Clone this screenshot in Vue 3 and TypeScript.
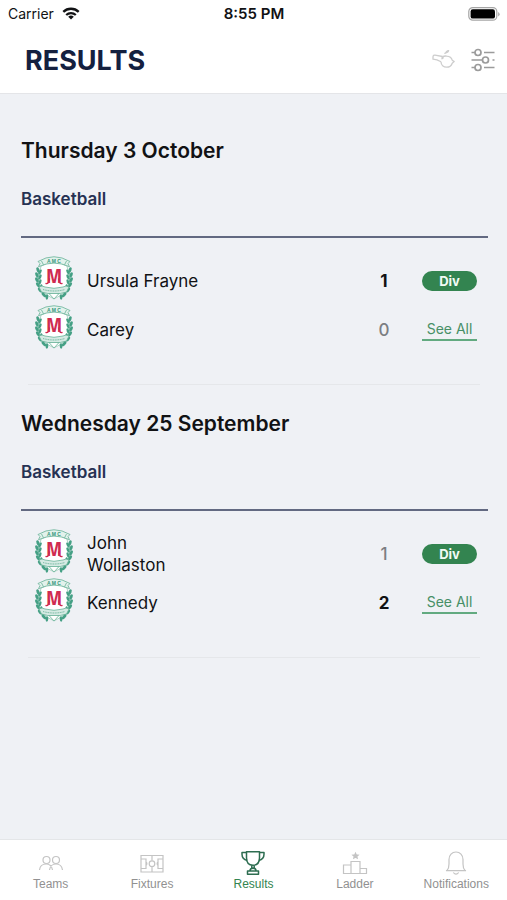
<script setup lang="ts">
interface Side {
  name: string
  score: number
  winner: boolean
}

interface MatchDay {
  date: string
  sport: string
  division: string
  sides: Side[]
}

interface Tab {
  id: string
  label: string
}

const days: MatchDay[] = [
  {
    date: 'Thursday 3 October',
    sport: 'Basketball',
    division: 'Div',
    sides: [
      { name: 'Ursula Frayne', score: 1, winner: true },
      { name: 'Carey', score: 0, winner: false },
    ],
  },
  {
    date: 'Wednesday 25 September',
    sport: 'Basketball',
    division: 'Div',
    sides: [
      { name: 'John Wollaston', score: 1, winner: false },
      { name: 'Kennedy', score: 2, winner: true },
    ],
  },
]

const tabs: Tab[] = [
  { id: 'teams', label: 'Teams' },
  { id: 'fixtures', label: 'Fixtures' },
  { id: 'results', label: 'Results' },
  { id: 'ladder', label: 'Ladder' },
  { id: 'notifications', label: 'Notifications' },
]

const activeTab = 'results'
const leaves = [0, 1, 2, 3, 4, 5]
</script>

<template>
  <div class="app">
    <div class="status">
      <div class="carrier">
        <span>Carrier</span>
        <svg class="wifi" viewBox="0 0 18 13" aria-hidden="true">
          <path d="M1.3 4.9a11 11 0 0 1 15.4 0" fill="none" stroke="currentColor" stroke-width="2.3" />
          <path d="M4.2 8a6.9 6.9 0 0 1 9.6 0" fill="none" stroke="currentColor" stroke-width="2.2" />
          <path d="M9 12.6 6.2 9.8a4 4 0 0 1 5.6 0z" fill="currentColor" />
        </svg>
      </div>
      <span class="time">8:55 PM</span>
      <div class="power">
        <svg class="battery" viewBox="0 0 32 14" aria-hidden="true">
          <rect x="0.8" y="0.6" width="28" height="12.6" rx="4" fill="none" stroke="#a5a5a5" stroke-width="1.2" />
          <rect x="2.6" y="2.3" width="24.4" height="9.3" rx="2.2" fill="#000" />
          <path d="M30.2 5v4.4q1.4-.8 1.4-2.2T30.2 5z" fill="#a5a5a5" />
        </svg>
      </div>
    </div>

    <header class="header">
      <h1>RESULTS</h1>
      <div class="actions">
        <button type="button" aria-label="Live scores">
          <svg class="whistle" viewBox="0 0 24 20" fill="none" stroke="#cdcdcd" stroke-width="1.3" stroke-linejoin="round">
            <path d="M1 6.200Q1.600 5 3 5.200l7.500 1.300M1 6.200v3q4 .2 8 2.600" />
            <path d="M10.500 6.700q2-.9 4.200-.6c3 .2 5 2 5.600 4.200l1.900 1.300-2 1.600c-.8 2.500-2.800 4-5.500 4-3.300 0-5.600-2.300-5.700-5.400M10.300 6.500l-.3 2.300 1.700-1.300" />
            <path d="M12.300 3.400l2.200-.6M13.700 2.700q.8-1.900 2.900-2.200-.2 1.900-2.900 2.200z" />
          </svg>
        </button>
        <button type="button" aria-label="Filter results">
          <svg class="filter" viewBox="0 0 24 24" fill="none" stroke="#9b9b9b" stroke-width="1.700">
            <path d="M.5 4.500H4M13 4.500h10.500M.5 12h11M21.500 12h2M.5 19.500H4M13 19.500h10.500" />
            <circle cx="7" cy="4.500" r="3" />
            <circle cx="14.500" cy="12" r="3" />
            <circle cx="7" cy="19.500" r="3" />
          </svg>
        </button>
      </div>
    </header>

    <main class="content">
      <section v-for="day in days" :key="day.date" class="day">
        <h2>{{ day.date }}</h2>
        <h3>{{ day.sport }}</h3>
        <div class="match">
          <ul class="sides">
            <li v-for="side in day.sides" :key="side.name" class="side">
              <svg class="crest" viewBox="0 0 40 44" aria-hidden="true">
                <path d="M7 10Q20 3 33 10l3 16q-1 10-16 17Q5 36 4 26z" fill="#fff" stroke="#9dcdbb" stroke-width="0.8" />
                <g fill="#45a085">
                  <g v-for="n in leaves" :key="n">
                    <ellipse :cx="[4, 3, 3, 4, 6, 10][n]" :cy="14 + n * 5" rx="1.500" ry="2.900" :transform="`rotate(${-20 - n * 5} ${[4, 3, 3, 4, 6, 10][n]} ${14 + n * 5})`" />
                    <ellipse :cx="[6, 6, 6, 7, 9, 13][n]" :cy="16 + n * 5" rx="1.300" ry="2.800" :transform="`rotate(${30 - n * 5} ${[6, 6, 6, 7, 9, 13][n]} ${16 + n * 5})`" />
                    <ellipse :cx="[36, 37, 37, 36, 34, 30][n]" :cy="14 + n * 5" rx="1.500" ry="2.900" :transform="`rotate(${20 + n * 5} ${[36, 37, 37, 36, 34, 30][n]} ${14 + n * 5})`" />
                    <ellipse :cx="[34, 34, 34, 33, 31, 27][n]" :cy="16 + n * 5" rx="1.300" ry="2.800" :transform="`rotate(${-30 + n * 5} ${[34, 34, 34, 33, 31, 27][n]} ${16 + n * 5})`" />
                  </g>
                </g>
                <path d="M4 5.500Q20-4 36 5.500l-2 2 1.500 3.200Q20 3.500 4.500 10.700L6 7.500z" fill="#e3f2ec" stroke="#67b197" stroke-width="0.8" />
                <path d="m7.500 5 2 3.800M32.500 5l-2 3.800" stroke="#67b197" stroke-width="0.8" />
                <text x="20" y="6.500" class="crest-motto">A M C</text>
                <text x="20" y="27" class="crest-letter">M</text>
                <path d="M15.500 23q-.5 5-3.500 4.500M24.500 23q.5 5 3.500 4.500" fill="none" stroke="#d02b50" stroke-width="1.300" stroke-linecap="round" />
                <path d="M5 31q3-2 6 0 9 2.600 18 0 3-2 6 0l-2.500 5Q20 40 7.500 36z" fill="#d5eae3" stroke="#67b197" stroke-width="0.8" />
                <path d="M9 33.500q11 3 22 0" fill="none" stroke="#67b197" stroke-width="1" stroke-dasharray="1 0.700" />
                <path d="M15 37.500h10L20 43z" fill="#fff" stroke="#67b197" stroke-width="0.8" />
              </svg>
              <span class="name">{{ side.name }}</span>
              <span class="score" :class="{ winner: side.winner }">{{ side.score }}</span>
            </li>
          </ul>
          <div class="links">
            <div class="cell"><span class="division">{{ day.division }}</span></div>
            <div class="cell"><a href="#all" class="see-all">See All</a></div>
          </div>
        </div>
      </section>
    </main>

    <nav class="tabs" aria-label="Main">
      <a v-for="tab in tabs" :key="tab.id" :href="`#${tab.id}`" class="tab" :class="{ active: tab.id === activeTab }">
        <svg class="tab-icon" viewBox="0 0 26 26" fill="none" stroke="currentColor" stroke-width="1.200" aria-hidden="true">
          <template v-if="tab.id === 'teams'">
            <circle cx="8.500" cy="10" r="3.500" />
            <circle cx="18" cy="10" r="3.500" />
            <path d="M1.500 20c.4-3.800 3-6 6.700-6 3.400 0 5.600 2 6.300 6M11.500 20c.6-3.900 3-6 6.500-6s6 2.200 6.500 6" />
          </template>
          <template v-else-if="tab.id === 'fixtures'">
            <path d="M2 5.500h22v16.500H2zM13 5.500v5M13 16.500v5.500M2 9h5v9.500H2M24 9h-5v9.500h5M7 12q1.800 1.800 0 3.500M19 12q-1.800 1.800 0 3.500" />
            <circle cx="13" cy="13.700" r="2.800" />
          </template>
          <template v-else-if="tab.id === 'results'">
            <g stroke-width="1.500" stroke-linejoin="round">
              <path d="M6.500 1.800h13v6c0 5.200-3 7.500-6.500 7.500s-6.500-2.300-6.500-7.500z" />
              <path d="M6.500 2.500H2v1.700c0 3.300 1.700 5.300 5.200 6.300M19.500 2.500H24v1.700c0 3.300-1.700 5.300-5.200 6.300M11.800 15.300v3M14.200 15.300v3M10 20.800c0-1.600 1.300-2.500 3-2.500s3 .9 3 2.500M7.500 21h11v3.200h-11z" />
            </g>
          </template>
          <template v-else-if="tab.id === 'ladder'">
            <path d="M9 11.500h9v12H9zM9 15H1.500v8.500H9M18 18.500h6.500v5H18" />
            <path d="m13.500 3.200.8 1.700 1.900.2-1.400 1.300.4 1.800-1.700-.9-1.700.9.4-1.800-1.400-1.300 1.900-.2z" fill="currentColor" />
          </template>
          <template v-else>
            <path d="M4 20.500c1.800-2 2-3.500 2-6.500V9.500C6 5 9 2 13 2s7 3 7 7.500V14c0 3 .2 4.500 2 6.500zM3 20.700h20M10.300 22.500q2.700 3.400 5.400 0" />
          </template>
        </svg>
        <span>{{ tab.label }}</span>
      </a>
    </nav>
  </div>
</template>

<style>
body {
  margin: 0;
  background: #eff1f5;
}
</style>

<style scoped>
.app {
  display: flex;
  flex-direction: column;
  min-height: 100vh;
  font-family: Inter, "Liberation Sans", sans-serif;
  color: #111214;
}

.status {
  display: grid;
  grid-template-columns: 1fr auto 1fr;
  align-items: center;
  height: 27px;
  padding: 0 7px 0 8px;
  background: #fff;
  font-size: 14px;
}

.carrier {
  display: flex;
  align-items: center;
  gap: 8px;
}

.wifi {
  width: 18px;
  height: 13px;
}

.time {
  font-size: 15px;
  font-weight: 600;
}

.power {
  display: flex;
  justify-content: flex-end;
}

.battery {
  width: 32px;
  height: 14px;
}

.header {
  display: flex;
  align-items: center;
  justify-content: space-between;
  height: 66px;
  padding: 0 12px 0 25px;
  background: #fff;
  border-bottom: 1px solid #e4e5e8;
}

h1,
h2,
h3 {
  margin: 0;
}

h1 {
  font-size: 27px;
  font-weight: 700;
  color: #14203f;
}

.actions {
  display: flex;
  align-items: center;
  gap: 15px;
}

.actions button {
  display: flex;
  padding: 0;
  border: 0;
  background: none;
}

.whistle {
  width: 24px;
  height: 20px;
}

.filter {
  width: 24px;
  height: 24px;
}

.content {
  flex: 1;
  padding: 43px 19px 0 21px;
}

.day {
  margin-bottom: 25px;
}

h2 {
  font-size: 21px;
  line-height: 28px;
  font-weight: 600;
}

h3 {
  padding: 22px 0 25px;
  border-bottom: 2px solid #626981;
  font-size: 17px;
  line-height: 24px;
  font-weight: 600;
  color: #263253;
}

.match {
  display: flex;
  gap: 29px;
  margin: 0 8px 0 7px;
  padding: 18px 3px 30px 6px;
  border-bottom: 1px solid #e5e7ea;
}

.sides {
  flex: 1;
  margin: 0;
  padding: 0;
  list-style: none;
}

.side {
  display: flex;
  align-items: center;
  height: 49px;
}

.crest {
  flex: none;
  align-self: flex-start;
  width: 40px;
  height: 44px;
}

.crest-motto {
  font: 700 5px "Liberation Sans", sans-serif;
  text-anchor: middle;
  fill: #36977a;
}

.crest-letter {
  font: 400 20px "Liberation Sans Narrow", "Open Sans Condensed", "Roboto Condensed", "DejaVu Sans Condensed", sans-serif;
  text-anchor: middle;
  fill: #d02b50;
}

.name {
  width: 112px;
  margin-left: 13px;
  font-size: 17px;
  line-height: 22px;
}

.score {
  width: 18px;
  margin-left: auto;
  text-align: center;
  font-size: 17px;
  font-weight: 500;
  color: #7c7e82;
}

.score.winner {
  font-weight: 700;
  color: #111214;
}

.links {
  width: 55px;
}

.cell {
  display: flex;
  flex-direction: column;
  justify-content: center;
  height: 49px;
}

.division {
  border-radius: 10px;
  background: #338450;
  color: #f2fbf5;
  font-size: 13px;
  line-height: 20px;
  font-weight: 700;
  text-align: center;
}

.see-all {
  border-bottom: 2px solid #62aa80;
  color: #478f66;
  font-size: 14px;
  line-height: 20px;
  text-align: center;
  text-decoration: none;
}

.tabs {
  display: grid;
  grid-template-columns: repeat(5, 1fr);
  height: 60px;
  border-top: 1px solid #e4e6e8;
  background: #fff;
  font-family: "Liberation Sans", sans-serif;
}

.tab {
  display: flex;
  flex-direction: column;
  align-items: center;
  padding-top: 10px;
  font-size: 12px;
  line-height: 16px;
  color: #919191;
  text-decoration: none;
}

.tab-icon {
  width: 26px;
  height: 26px;
  color: #c4c4c4;
}

.tab.active {
  color: #338450;
}

.tab.active .tab-icon {
  color: #2d6d50;
}
</style>
